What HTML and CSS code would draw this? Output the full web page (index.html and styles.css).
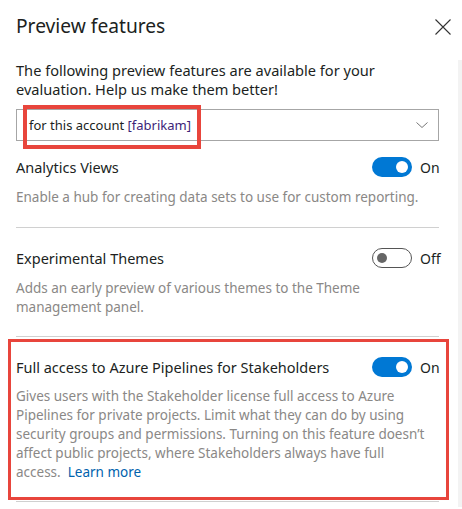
FILE: index.html
```html
<!DOCTYPE html>
<html>
<head>
<meta charset="utf-8">
<link rel="stylesheet" href="styles.css">
</head>
<body>
<div class="panel">
  <div class="header">
    <h1 class="title">Preview features</h1>
    <button class="close" aria-label="Close">
      <svg width="16" height="16" viewBox="0 0 16 16"><path d="M0.5 0.5 L15.5 15.5 M15.5 0.5 L0.5 15.5" stroke="#333" stroke-width="1.1" fill="none"/></svg>
    </button>
  </div>
  <div class="content">
    <p class="intro">The following preview features are available for your evaluation. Help us make them better!</p>
    <div class="dropdown">
      <span class="dd-text">for this account <span class="acct">[fabrikam]</span></span>
      <svg class="chev" width="12" height="6" viewBox="0 0 12 6"><path d="M0.5 0.5 L6 5.5 L11.5 0.5" stroke="#777" stroke-width="1" fill="none"/></svg>
      <span class="mark mark-dd"></span>
    </div>

    <div class="feature first">
      <div class="f-row">
        <span class="f-name">Analytics Views</span>
        <span class="toggle-wrap"><span class="toggle on"><span class="knob"></span></span><span class="t-label">On</span></span>
      </div>
      <p class="f-desc">Enable a hub for creating data sets to use for custom reporting.</p>
    </div>
    <div class="feature second">
      <div class="f-row">
        <span class="f-name">Experimental Themes</span>
        <span class="toggle-wrap"><span class="toggle off"><span class="knob"></span></span><span class="t-label">Off</span></span>
      </div>
      <p class="f-desc">Adds an early preview of various themes to the Theme management panel.</p>
    </div>
    <div class="feature highlighted">
      <div class="f-row">
        <span class="f-name">Full access to Azure Pipelines for Stakeholders</span>
        <span class="toggle-wrap"><span class="toggle on"><span class="knob"></span></span><span class="t-label">On</span></span>
      </div>
      <p class="f-desc">Gives users with the Stakeholder license full access to Azure Pipelines for private projects. Limit what they can do by using security groups and permissions. Turning on this feature doesn’t affect public projects, where Stakeholders always have full access.<a class="link" href="#">Learn more</a></p>
    </div>
    <div class="sep"></div>
  </div>
  <div class="scrolltrack"></div>
</div>
</body>
</html>
```

FILE: styles.css
```css
* { box-sizing: border-box; }
html, body { margin: 0; padding: 0; background: #fff; }
body {
  font-family: "Noto Sans", "Open Sans", sans-serif;
  color: #323130;
  width: 462px;
  height: 509px;
  overflow: hidden;
}
.panel { position: relative; height: 509px; }
.header {
  display: flex;
  justify-content: space-between;
  align-items: flex-start;
  padding: 12px 11px 0 16px;
}
.title {
  margin: 0;
  font-size: 19.2px;
  font-weight: 400;
  line-height: 28px;
  color: #201f1e;
}
.close {
  border: 0;
  background: none;
  padding: 0;
  margin-top: 7px;
  width: 16px;
  height: 16px;
  display: block;
}
.close svg { display: block; }
.content { padding: 0 23px 0 16px; }
.intro {
  margin: 21px 0 0;
  max-width: 410px;
  font-size: 14.6px;
  line-height: 19px;
  color: #201f1e;
}
.dropdown {
  position: relative;
  margin-top: 10px;
  height: 32px;
  border: 1px solid #a6a6a6;
  display: flex;
  align-items: center;
  justify-content: space-between;
  padding: 0 10px 0 12px;
  font-size: 13px;
  color: #201f1e;
}
.acct { color: #3d2478; }
.chev { display: block; margin-top: -1px; }
.mark { position: absolute; border: 4px solid #e8453c; pointer-events: none; }
.mark-dd { left: 6px; top: -5px; width: 178px; height: 44px; }
.feature { border-bottom: 1px solid #d0d0d0; }
.f-row {
  display: flex;
  justify-content: space-between;
  align-items: center;
  height: 20px;
}
.first { padding-top: 16px; }
.second { padding-top: 20px; }
.f-name { font-size: 14.5px; line-height: 20px; color: #201f1e; }
.toggle-wrap { display: flex; align-items: center; gap: 8px; }
.toggle {
  width: 40px; height: 20px; border-radius: 10px;
  display: flex; align-items: center; padding: 0 5px;
}
.toggle .knob { width: 12px; height: 12px; border-radius: 50%; }
.toggle.on { background: #0078d4; justify-content: flex-end; padding: 0 4px; }
.toggle.on .knob { background: #fff; }
.toggle.off { border: 1px solid #555; justify-content: flex-start; padding: 0 4px; }
.toggle.off .knob { background: #666; width: 10px; height: 10px; }
.t-label { font-size: 14px; width: 19px; color: #201f1e; white-space: nowrap; }
.f-desc {
  margin: 11px 0 0;
  max-width: 412px;
  font-size: 13.5px;
  line-height: 19px;
  color: #8a8886;
}
.first .f-desc { padding-bottom: 20px; }
.second .f-desc { padding-bottom: 19px; }
.link { color: #0062ad; text-decoration: none; margin-left: 7px; }
.highlighted {
  margin: 2px -10px 0 -8px;
  padding: 15px 7px 15px 5px;
  border: 3px solid #e8453c;
}
.highlighted .f-desc { margin-top: 10px; }
.sep { margin-top: 1px; height: 1px; background: #d0d0d0; }
.scrolltrack {
  position: absolute;
  right: 0;
  top: 60px;
  width: 4px;
  bottom: 2px;
  background: #f3f3f3;
}
```
